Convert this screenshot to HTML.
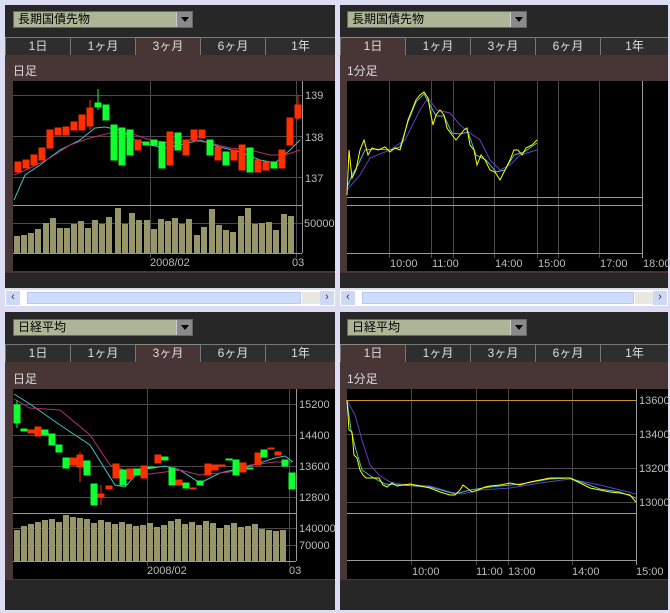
<!DOCTYPE html>
<html><head><meta charset="utf-8"><style>
*{margin:0;padding:0;box-sizing:border-box}
body{width:670px;height:613px;background:#dcdcf2;position:relative;overflow:hidden;font-family:"Liberation Sans","Noto Sans CJK JP",sans-serif}
.p{position:absolute;background:#272727}
.combo{position:absolute;height:17px;width:180px;background:#aeb596;border:1px solid #666;font-size:12px;line-height:15px;padding-left:4px;color:#000}
.combo .btn{position:absolute;right:0;top:0;width:16px;height:15px;background:#8a8a8a;border-left:1px solid #ccc}
.combo .btn:after{content:"";position:absolute;left:4px;top:5px;border:4px solid transparent;border-top:5px solid #000}
.tab{position:absolute;height:18px;border-top:1px solid #777;border-left:1px solid #777;background:#2e2e2e;color:#ddd;font-size:12px;text-align:center;line-height:17px}
.tab.a{background:#483636;border-top:1px solid #888}
.brown{position:absolute;background:#483636}
.lbl{position:absolute;color:#ddd;font-size:12px}
.sb{position:absolute;height:16px;background:#fff}
.sb .tr{position:absolute;left:22px;right:34px;top:2px;bottom:2px;background:#cfdcfb;border:1px solid #b8c8ee}
.sb .th{position:absolute;right:15px;top:2px;width:18px;bottom:2px;background:#e8e8e0}
.sb .b{position:absolute;top:1px;width:14px;height:14px;background:#cdd8f5;color:#335;font-size:11px;line-height:13px;text-align:center}
svg text{font-family:"Liberation Sans",sans-serif;font-size:11px;fill:#bbb}
</style></head><body>

<div class="p" style="left:5px;top:5px;width:330px;height:283px"></div>
<div class="p" style="left:340px;top:5px;width:328px;height:283px"></div>
<div class="p" style="left:5px;top:312px;width:330px;height:298px"></div>
<div class="p" style="left:340px;top:312px;width:328px;height:298px"></div>

<div class="combo" style="left:13px;top:11px">長期国債先物<div class="btn"></div></div>
<div class="combo" style="left:347px;top:11px">長期国債先物<div class="btn"></div></div>
<div class="combo" style="left:13px;top:319px">日経平均<div class="btn"></div></div>
<div class="combo" style="left:347px;top:319px">日経平均<div class="btn"></div></div>

<div class="brown" style="left:5px;top:55px;width:330px;height:218px"></div>
<div class="brown" style="left:340px;top:55px;width:328px;height:218px"></div>
<div class="brown" style="left:5px;top:362px;width:330px;height:218px"></div>
<div class="brown" style="left:340px;top:362px;width:328px;height:218px"></div>

<div class="tab" style="left:5px;top:37px;width:65px">1日</div>
<div class="tab" style="left:70px;top:37px;width:65px">1ヶ月</div>
<div class="tab a" style="left:135px;top:37px;width:65px">3ヶ月</div>
<div class="tab" style="left:200px;top:37px;width:65px">6ヶ月</div>
<div class="tab" style="left:265px;top:37px;width:70px">1年</div>
<div class="tab a" style="left:340px;top:37px;width:65px">1日</div>
<div class="tab" style="left:405px;top:37px;width:65px">1ヶ月</div>
<div class="tab" style="left:470px;top:37px;width:65px">3ヶ月</div>
<div class="tab" style="left:535px;top:37px;width:65px">6ヶ月</div>
<div class="tab" style="left:600px;top:37px;width:68px">1年</div>
<div class="tab" style="left:5px;top:344px;width:65px">1日</div>
<div class="tab" style="left:70px;top:344px;width:65px">1ヶ月</div>
<div class="tab a" style="left:135px;top:344px;width:65px">3ヶ月</div>
<div class="tab" style="left:200px;top:344px;width:65px">6ヶ月</div>
<div class="tab" style="left:265px;top:344px;width:70px">1年</div>
<div class="tab a" style="left:340px;top:344px;width:65px">1日</div>
<div class="tab" style="left:405px;top:344px;width:65px">1ヶ月</div>
<div class="tab" style="left:470px;top:344px;width:65px">3ヶ月</div>
<div class="tab" style="left:535px;top:344px;width:65px">6ヶ月</div>
<div class="tab" style="left:600px;top:344px;width:68px">1年</div>

<div class="lbl" style="left:13px;top:62px">日足</div>
<div class="lbl" style="left:347px;top:62px">1分足</div>
<div class="lbl" style="left:13px;top:370px">日足</div>
<div class="lbl" style="left:347px;top:370px">1分足</div>

<div class="sb" style="left:5px;top:290px;width:330px"><div class="b" style="left:1px">&lsaquo;</div><div class="tr"></div><div class="th"></div><div class="b" style="right:1px">&rsaquo;</div></div>
<div class="sb" style="left:340px;top:290px;width:328px"><div class="b" style="left:1px">&lsaquo;</div><div class="tr"></div><div class="th"></div><div class="b" style="right:1px">&rsaquo;</div></div>

<svg width="670" height="613" style="position:absolute;left:0;top:0">
<rect x="13" y="81" width="322" height="190" fill="#000"/>
<g stroke="#4a4a4a" stroke-width="1">
<line x1="13" y1="95.5" x2="302" y2="95.5"/><line x1="13" y1="136.5" x2="302" y2="136.5"/><line x1="13" y1="177.5" x2="302" y2="177.5"/>
<line x1="13" y1="223.5" x2="302" y2="223.5"/><line x1="150.5" y1="81" x2="150.5" y2="258"/><line x1="296.5" y1="81" x2="296.5" y2="258"/>
</g>
<g stroke="#999"><line x1="13" y1="205.5" x2="302" y2="205.5"/><line x1="13" y1="253.5" x2="302" y2="253.5"/><line x1="302.5" y1="81" x2="302.5" y2="253"/></g>
<text x="305" y="99">139</text><text x="305" y="141">138</text><text x="305" y="182">137</text><text x="304" y="227">50000</text>
<text x="150" y="266">2008/02</text><text x="292" y="266">03</text>
<g fill="#969668">
<rect x="14" y="236" width="6" height="17"/><rect x="21" y="235" width="6" height="18"/><rect x="28" y="233" width="6" height="20"/><rect x="35" y="229" width="6" height="24"/><rect x="43" y="223" width="6" height="30"/><rect x="50" y="218" width="6" height="35"/><rect x="57" y="228" width="6" height="25"/><rect x="64" y="228" width="6" height="25"/><rect x="71" y="224" width="6" height="29"/><rect x="78" y="221" width="6" height="32"/><rect x="85" y="228" width="6" height="25"/><rect x="92" y="220" width="6" height="33"/><rect x="99" y="224" width="6" height="29"/><rect x="106" y="217" width="6" height="36"/><rect x="115" y="208" width="6" height="45"/><rect x="122" y="224" width="6" height="29"/><rect x="129" y="213" width="6" height="40"/><rect x="136" y="220" width="6" height="33"/><rect x="144" y="220" width="6" height="33"/><rect x="151" y="229" width="6" height="24"/><rect x="158" y="219" width="6" height="34"/><rect x="165" y="221" width="6" height="32"/><rect x="172" y="218" width="6" height="35"/><rect x="179" y="224" width="6" height="29"/><rect x="186" y="219" width="6" height="34"/><rect x="194" y="235" width="6" height="18"/><rect x="201" y="227" width="6" height="26"/><rect x="209" y="209" width="6" height="44"/><rect x="216" y="225" width="6" height="28"/><rect x="223" y="230" width="6" height="23"/><rect x="230" y="232" width="6" height="21"/><rect x="238" y="216" width="6" height="37"/><rect x="245" y="208" width="6" height="45"/><rect x="252" y="224" width="6" height="29"/><rect x="259" y="223" width="6" height="30"/><rect x="266" y="222" width="6" height="31"/><rect x="273" y="230" width="6" height="23"/><rect x="281" y="214" width="6" height="39"/><rect x="288" y="216" width="6" height="37"/>
</g>
<polyline fill="none" stroke="#40c0c0" points="14,200 25,175 40,165 60,150 80,140 95,128 105,127 120,130 135,140 150,145 165,148 180,145 200,140 220,147 240,152 260,160 275,163 290,150 300,140"/>
<polyline fill="none" stroke="#b03070" points="14,175 30,168 50,158 70,145 90,138 110,133 130,133 150,140 170,143 190,140 210,143 230,148 250,150 270,155 285,155 300,150"/>
<g stroke-width="1">
<g fill="#ff3000" stroke="#ff3000">
<rect x="15" y="162" width="6" height="10"/><rect x="23" y="160" width="6" height="8"/><rect x="31" y="155" width="6" height="10"/><rect x="39" y="148" width="6" height="12"/><rect x="47" y="130" width="6" height="18"/><rect x="55" y="128" width="6" height="7"/><rect x="63" y="127" width="6" height="8"/><rect x="71" y="122" width="6" height="8"/><rect x="79" y="115" width="6" height="15"/><rect x="87" y="108" width="6" height="18"/><rect x="135" y="140" width="6" height="10"/><rect x="167" y="132" width="6" height="33"/><rect x="183" y="140" width="6" height="15"/><rect x="191" y="130" width="6" height="10"/><rect x="199" y="130" width="6" height="8"/><rect x="215" y="147" width="6" height="13"/><rect x="231" y="150" width="6" height="10"/><rect x="239" y="145" width="6" height="25"/><rect x="255" y="160" width="6" height="12"/><rect x="263" y="162" width="6" height="8"/><rect x="279" y="150" width="6" height="18"/><rect x="287" y="118" width="6" height="27"/><rect x="295" y="105" width="6" height="13"/>
<line x1="90" y1="100" x2="90" y2="130"/><line x1="298" y1="95" x2="298" y2="120"/>
</g>
<g fill="#10ff30" stroke="#10ff30">
<rect x="95" y="103" width="6" height="4"/><rect x="103" y="105" width="6" height="15"/><rect x="111" y="125" width="6" height="35"/><rect x="119" y="128" width="6" height="37"/><rect x="127" y="130" width="6" height="25"/><rect x="143" y="142" width="6" height="3"/><rect x="151" y="140" width="6" height="5"/><rect x="159" y="142" width="6" height="26"/><rect x="175" y="133" width="6" height="17"/><rect x="207" y="140" width="6" height="15"/><rect x="223" y="152" width="6" height="13"/><rect x="247" y="148" width="6" height="24"/><rect x="271" y="162" width="6" height="6"/>
<line x1="98" y1="89" x2="98" y2="110"/>
</g></g>

<rect x="347" y="81" width="321" height="190" fill="#000"/>
<g stroke="#4a4a4a"><line x1="389.5" y1="81" x2="389.5" y2="258"/><line x1="431.5" y1="81" x2="431.5" y2="258"/><line x1="453.5" y1="81" x2="453.5" y2="258"/><line x1="494.5" y1="81" x2="494.5" y2="258"/><line x1="537.5" y1="81" x2="537.5" y2="258"/><line x1="558.5" y1="81" x2="558.5" y2="258"/><line x1="599.5" y1="81" x2="599.5" y2="258"/></g>
<g stroke="#999"><line x1="347" y1="205.5" x2="642" y2="205.5"/><line x1="347" y1="253.5" x2="642" y2="253.5"/><line x1="642.5" y1="81" x2="642.5" y2="258"/></g>
<line x1="347" y1="197.5" x2="642" y2="197.5" stroke="#d09020"/>
<text x="390" y="267">10:00</text><text x="432" y="267">11:00</text><text x="495" y="267">14:00</text><text x="538" y="267">15:00</text><text x="600" y="267">17:00</text><text x="643" y="267">18:00</text>
<polyline fill="none" stroke="#6040c0" points="347,190 360,175 370,158 390,150 405,140 420,110 428,98 437,110 450,113 460,125 470,133 480,140 490,160 500,170 510,165 520,155 537,150"/>
<polyline fill="none" stroke="#40c0c0" points="347,188 352,175 358,165 365,150 375,149 390,150 400,147 408,122 416,102 424,94 430,105 436,116 444,116 452,133 460,134 468,132 476,155 486,160 496,172 505,170 514,155 524,152 537,143"/>
<polyline fill="none" stroke="#ffff00" points="347,195 349,150 352,178 356,170 360,150 364,140 368,155 372,148 378,150 385,147 390,152 395,148 400,150 403,140 408,120 412,110 416,100 420,95 424,92 428,98 430,110 433,125 436,115 440,110 444,115 447,128 452,135 456,140 460,135 464,130 467,128 470,145 474,150 477,165 481,155 485,160 490,170 495,172 500,180 505,170 510,160 514,150 518,150 522,155 526,148 532,145 537,140"/>

<rect x="13" y="389" width="322" height="190" fill="#000"/>
<g stroke="#4a4a4a"><line x1="13" y1="404.5" x2="296" y2="404.5"/><line x1="13" y1="435.5" x2="296" y2="435.5"/><line x1="13" y1="466.5" x2="296" y2="466.5"/><line x1="13" y1="497.5" x2="296" y2="497.5"/><line x1="13" y1="528.5" x2="296" y2="528.5"/><line x1="13" y1="545.5" x2="296" y2="545.5"/><line x1="147.5" y1="389" x2="147.5" y2="566"/><line x1="289.5" y1="389" x2="289.5" y2="566"/></g>
<g stroke="#999"><line x1="13" y1="513.5" x2="296" y2="513.5"/><line x1="13" y1="561.5" x2="296" y2="561.5"/><line x1="296.5" y1="389" x2="296.5" y2="561"/></g>
<text x="299" y="408">15200</text><text x="299" y="439">14400</text><text x="299" y="470">13600</text><text x="299" y="501">12800</text><text x="299" y="532">140000</text><text x="299" y="549">70000</text>
<text x="147" y="574">2008/02</text><text x="289" y="574">03</text>
<g fill="#969668">
<rect x="14" y="530" width="6" height="31"/><rect x="21" y="526" width="6" height="35"/><rect x="28" y="524" width="6" height="37"/><rect x="35" y="522" width="6" height="39"/><rect x="42" y="520" width="6" height="41"/><rect x="49" y="519" width="6" height="42"/><rect x="56" y="522" width="6" height="39"/><rect x="63" y="515" width="6" height="46"/><rect x="70" y="517" width="6" height="44"/><rect x="77" y="518" width="6" height="43"/><rect x="84" y="519" width="6" height="42"/><rect x="91" y="523" width="6" height="38"/><rect x="98" y="520" width="6" height="41"/><rect x="105" y="522" width="6" height="39"/><rect x="112" y="524" width="6" height="37"/><rect x="119" y="522" width="6" height="39"/><rect x="126" y="524" width="6" height="37"/><rect x="133" y="526" width="6" height="35"/><rect x="140" y="525" width="6" height="36"/><rect x="147" y="523" width="6" height="38"/><rect x="154" y="527" width="6" height="34"/><rect x="161" y="525" width="6" height="36"/><rect x="168" y="521" width="6" height="40"/><rect x="175" y="519" width="6" height="42"/><rect x="182" y="524" width="6" height="37"/><rect x="189" y="522" width="6" height="39"/><rect x="196" y="525" width="6" height="36"/><rect x="203" y="521" width="6" height="40"/><rect x="210" y="523" width="6" height="38"/><rect x="217" y="528" width="6" height="33"/><rect x="224" y="525" width="6" height="36"/><rect x="231" y="523" width="6" height="38"/><rect x="238" y="527" width="6" height="34"/><rect x="245" y="526" width="6" height="35"/><rect x="252" y="524" width="6" height="37"/><rect x="259" y="529" width="6" height="32"/><rect x="266" y="530" width="6" height="31"/><rect x="273" y="531" width="6" height="30"/><rect x="280" y="530" width="6" height="31"/>
</g>
<polyline fill="none" stroke="#40c0c0" points="14,394 30,404 60,425 90,445 115,485 125,487 140,470 165,466 180,470 200,483 220,473 250,466 275,458 285,456 293,462"/>
<polyline fill="none" stroke="#b03070" points="14,399 30,408 60,410 90,435 110,465 130,472 150,474 180,470 200,475 230,472 250,465 275,462 292,462"/>
<g fill="#ff3000" stroke="#ff3000">
<rect x="28" y="430" width="6" height="3"/><rect x="35" y="427" width="6" height="9"/><rect x="70" y="458" width="6" height="7"/><rect x="77" y="455" width="6" height="12"/><rect x="98" y="494" width="6" height="3"/><rect x="106" y="486" width="6" height="3"/><rect x="113" y="464" width="6" height="14"/><rect x="127" y="469" width="6" height="10"/><rect x="141" y="466" width="6" height="12"/><rect x="155" y="455" width="6" height="8"/><rect x="176" y="480" width="6" height="5"/><rect x="205" y="464" width="6" height="11"/><rect x="212" y="465" width="6" height="5"/><rect x="219" y="465" width="6" height="1"/><rect x="240" y="463" width="6" height="9"/><rect x="255" y="453" width="6" height="12"/><rect x="268" y="448" width="6" height="1"/><rect x="275" y="452" width="6" height="3"/><rect x="190" y="488" width="6" height="1"/>
<line x1="80" y1="452" x2="80" y2="482"/><line x1="101" y1="485" x2="101" y2="505"/>
</g>
<g fill="#10ff30" stroke="#10ff30">
<rect x="14" y="405" width="6" height="18"/><rect x="21" y="429" width="6" height="2"/><rect x="42" y="430" width="6" height="5"/><rect x="49" y="434" width="6" height="11"/><rect x="56" y="445" width="6" height="7"/><rect x="63" y="458" width="6" height="10"/><rect x="84" y="461" width="6" height="14"/><rect x="91" y="484" width="6" height="21"/><rect x="120" y="470" width="6" height="15"/><rect x="134" y="469" width="6" height="6"/><rect x="148" y="467" width="6" height="1"/><rect x="162" y="457" width="6" height="3"/><rect x="169" y="468" width="6" height="17"/><rect x="183" y="483" width="6" height="5"/><rect x="197" y="481" width="6" height="4"/><rect x="226" y="459" width="6" height="1"/><rect x="233" y="460" width="6" height="15"/><rect x="247" y="468" width="6" height="1"/><rect x="261" y="450" width="6" height="7"/><rect x="282" y="460" width="6" height="6"/><rect x="289" y="473" width="6" height="16"/>
<line x1="17" y1="400" x2="17" y2="428"/>
</g>

<rect x="347" y="389" width="321" height="190" fill="#000"/>
<g stroke="#4a4a4a"><line x1="347" y1="434.5" x2="636" y2="434.5"/><line x1="347" y1="468.5" x2="636" y2="468.5"/><line x1="347" y1="502.5" x2="636" y2="502.5"/><line x1="411.5" y1="389" x2="411.5" y2="565"/><line x1="476.5" y1="389" x2="476.5" y2="565"/><line x1="508.5" y1="389" x2="508.5" y2="565"/><line x1="572.5" y1="389" x2="572.5" y2="565"/></g>
<g stroke="#999"><line x1="347" y1="513.5" x2="636" y2="513.5"/><line x1="347" y1="560.5" x2="636" y2="560.5"/><line x1="636.5" y1="389" x2="636.5" y2="565"/></g>
<line x1="347" y1="400.5" x2="636" y2="400.5" stroke="#d09020"/>
<text x="639" y="404">13600</text><text x="639" y="438">13400</text><text x="639" y="472">13200</text><text x="639" y="506">13000</text>
<text x="412" y="575">10:00</text><text x="476" y="575">11:00</text><text x="508" y="575">13:00</text><text x="572" y="575">14:00</text><text x="636" y="575">15:00</text>
<polyline fill="none" stroke="#6040c0" points="347,400 355,415 362,440 370,465 380,476 390,482 400,484 430,486 450,492 462,494 480,490 510,488 540,483 570,479 600,485 620,490 636,494"/>
<polyline fill="none" stroke="#40c0c0" points="347,400 351,430 356,450 362,470 372,477 385,484 400,485 430,487 455,494 470,490 490,487 520,484 550,479 570,478 600,489 620,492 636,498"/>
<polyline fill="none" stroke="#ffff00" points="347,400 349,430 352,432 354,455 357,458 360,470 363,475 366,478 370,478 375,478 379,478 383,485 387,487 392,483 397,486 403,485 410,484 415,485 420,486 430,488 440,492 450,495 455,495 460,490 463,485 467,488 472,492 478,490 485,487 490,486 500,485 510,483 520,485 530,482 540,480 550,478 560,478 570,478 580,483 590,488 600,490 610,492 620,493 630,495 636,502"/>
</svg>
</body></html>
